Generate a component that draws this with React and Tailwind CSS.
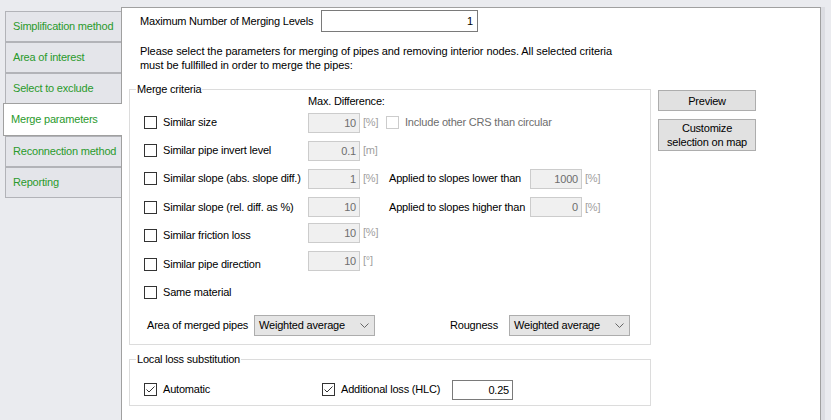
import React from 'react'

const tabs = [
  'Simplification method',
  'Area of interest',
  'Select to exclude',
  'Merge parameters',
  'Reconnection method',
  'Reporting',
]

const rows = [
  { label: 'Similar size', h: 'h-[29px]', val: '10', unit: '[%]', include: true },
  { label: 'Similar pipe invert level', h: 'h-[27px]', val: '0.1', unit: '[m]' },
  { label: 'Similar slope (abs. slope diff.)', h: 'h-[29px]', val: '1', unit: '[%]', applied: 'Applied to slopes lower than', appliedVal: '1000' },
  { label: 'Similar slope (rel. diff. as %)', h: 'h-[28px]', val: '10', unit: '', applied: 'Applied to slopes higher than', appliedVal: '0' },
  { label: 'Similar friction loss', h: 'h-[29px]', val: '10', unit: '[%]', shift: '-mt-[6px]' },
  { label: 'Similar pipe direction', h: 'h-[28px]', val: '10', unit: '[°]', shift: '-mt-[7px]' },
  { label: 'Same material', h: 'h-[28px]' },
]

function Check({ checked = false, disabled = false }) {
  return (
    <span
      className={`w-[13px] h-[13px] shrink-0 border bg-white flex items-center justify-center ${
        disabled ? 'border-[#cccccc]' : 'border-[#333333]'
      }`}
    >
      {checked && (
        <svg width="11" height="11" viewBox="0 0 11 11">
          <path d="M1.5 5.5 L4 8 L9.5 2.5" fill="none" stroke="#333" strokeWidth="1" />
        </svg>
      )}
    </span>
  )
}

function Field({ value, className = '' }) {
  return (
    <div
      className={`w-[52px] h-[20px] shrink-0 border border-[#cccccc] bg-[#f0f0f0] text-right pr-[3px] leading-[18px] text-[#6d6d6d] ${className}`}
    >
      {value}
    </div>
  )
}

function Combo() {
  return (
    <div className="w-[121px] h-[21px] shrink-0 border border-[#adadad] bg-[#e5e5e5] flex items-center justify-between pl-[4px] pr-[5px] whitespace-nowrap">
      <span>Weighted average</span>
      <svg width="9" height="5" viewBox="0 0 9 5">
        <path d="M0.5 0.5 L4.5 4.5 L8.5 0.5" fill="none" stroke="#666" strokeWidth="1" />
      </svg>
    </div>
  )
}

function Button({ children, className = '' }) {
  return (
    <div className={`w-[98px] border border-[#adadad] bg-[#e1e1e1] flex items-center justify-center text-center leading-[14px] ${className}`}>
      {children}
    </div>
  )
}

export default function App() {
  return (
    <div className="w-[831px] h-[420px] overflow-hidden bg-[#eaebef] flex font-['Liberation_Sans',Arial,sans-serif] text-[11px] tracking-[-0.2px] text-black">
      {/* tab strip */}
      <div className="w-[121px] shrink-0 pt-[11px] pl-[5px] flex flex-col whitespace-nowrap">
        {tabs.map((t, i) =>
          i === 3 ? (
            <div
              key={t}
              className="relative z-10 -ml-[2px] -mt-px w-[119px] h-[33px] bg-white border-t border-l border-b border-[#a0a0a0] flex items-center pl-[7px] text-[#2a9a2c]"
            >
              {t}
            </div>
          ) : (
            <div
              key={t}
              className="w-[116px] h-[31px] bg-[#e4e5ea] border-t border-l border-b border-[#b2b3b8] flex items-center pl-[7px] text-[#2a9a2c]"
            >
              {t}
            </div>
          )
        )}
      </div>

      {/* page */}
      <div className="mt-[7px] w-[700px] shrink-0 bg-white border-t border-l border-r border-[#a0a0a0] flex flex-col">
        <div className="mt-[2px] h-[22px] flex items-center">
          <span className="ml-[18px] w-[181px] whitespace-nowrap">Maximum Number of Merging Levels</span>
          <div className="w-[157px] h-[22px] border border-[#7a7a7a] text-right pr-[4px] leading-[20px]">1</div>
        </div>

        <p className="mt-[12px] ml-[18px] leading-[14px] whitespace-nowrap tracking-[-0.08px]">
          Please select the parameters for merging of pipes and removing interior nodes. All selected criteria
          <br />
          must be fullfilled in order to merge the pipes:
        </p>

        <div className="mt-[10px] ml-[7px] flex items-start">
          <fieldset className="w-[522px] border border-[#dcdcdc] pb-[8px]">
            <legend className="ml-[6px] px-[1px] leading-[14px]">Merge criteria</legend>
            <div className="-mt-[2px] ml-[178px] leading-[14px]">Max. Difference:</div>

            {rows.map((r) => (
              <div key={r.label} className={`${r.h} flex items-center pl-[14px] whitespace-nowrap`}>
                <Check />
                <span className="ml-[6px] w-[145px]">{r.label}</span>
                {r.val && (
                  <>
                    <Field value={r.val} className={r.shift || ''} />
                    <span className={`ml-[3px] w-[23px] text-[#a0a0a0] ${r.shift || ''}`}>{r.unit}</span>
                  </>
                )}
                {r.include && (
                  <>
                    <Check disabled />
                    <span className="ml-[6px] text-[#6d6d6d]">Include other CRS than circular</span>
                  </>
                )}
                {r.applied && (
                  <>
                    <span className="ml-[3px] w-[141px]">{r.applied}</span>
                    <Field value={r.appliedVal} />
                    <span className="ml-[3px] text-[#a0a0a0]">[%]</span>
                  </>
                )}
              </div>
            ))}

            <div className="mt-[9px] h-[21px] flex items-center whitespace-nowrap">
              <span className="ml-[17px] w-[107px]">Area of merged pipes</span>
              <Combo />
              <span className="ml-[75px] w-[59px]">Rougness</span>
              <Combo />
            </div>
          </fieldset>

          <div className="ml-[7px] mt-[8px] flex flex-col gap-[8px]">
            <Button className="h-[21px]">Preview</Button>
            <Button className="h-[32px]">
              Customize
              <br />
              selection on map
            </Button>
          </div>
        </div>

        <fieldset className="mt-[7px] ml-[7px] w-[522px] border border-[#dcdcdc] pb-[5px]">
          <legend className="ml-[6px] px-[1px] leading-[14px]">Local loss substitution</legend>
          <div className="mt-[13px] h-[21px] flex items-center pl-[14px] whitespace-nowrap">
            <Check checked />
            <span className="ml-[6px] w-[159px]">Automatic</span>
            <Check checked />
            <span className="ml-[6px] w-[111px]">Additional loss (HLC)</span>
            <div className="w-[61px] h-[20px] border border-[#7a7a7a] text-right pr-[3px] leading-[18px]">0.25</div>
          </div>
        </fieldset>
      </div>

      <div className="mt-[7px] w-[4px] bg-[#dcdde2]" />
    </div>
  )
}
